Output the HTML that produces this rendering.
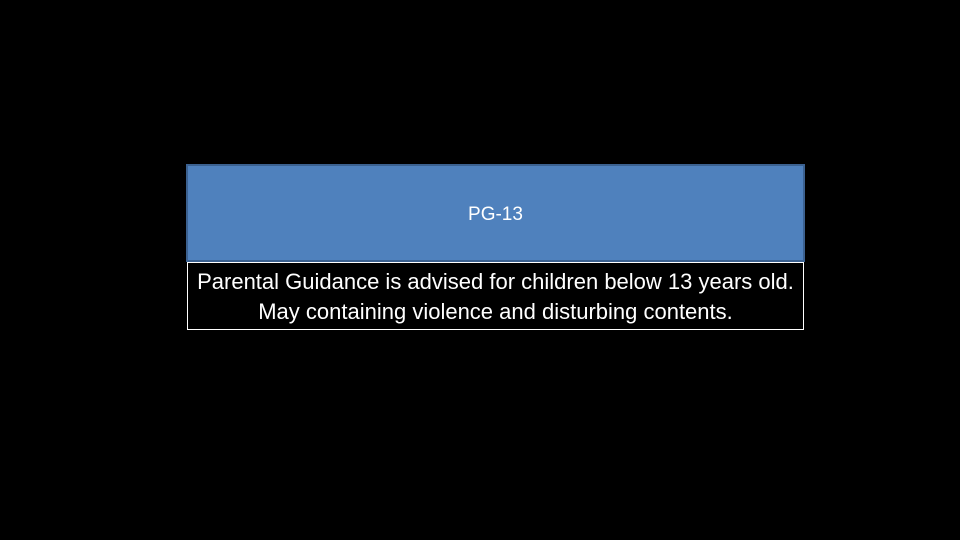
<!DOCTYPE html>
<html><head><style>
html,body{margin:0;padding:0;background:#000;width:960px;height:540px;overflow:hidden;font-family:"Liberation Sans",sans-serif;}
.top{position:absolute;left:186px;top:164px;width:615px;height:94px;background:#4f81bd;border:2px solid #3b6190;color:#fff;font-size:19px;text-align:center;line-height:20px;}
.top span{position:relative;top:39px;}
.bot{position:absolute;left:187px;top:262px;width:615px;height:66px;border:1px solid #fff;color:#fff;font-size:22px;text-align:center;line-height:30px;box-sizing:content-box;white-space:nowrap;}
.bot div{padding-top:4px;}
</style></head><body>
<div class="top"><span>PG-13</span></div>
<div class="bot"><div>Parental Guidance is advised for children below 13 years old.<br>May containing violence and disturbing contents.</div></div>
</body></html>
